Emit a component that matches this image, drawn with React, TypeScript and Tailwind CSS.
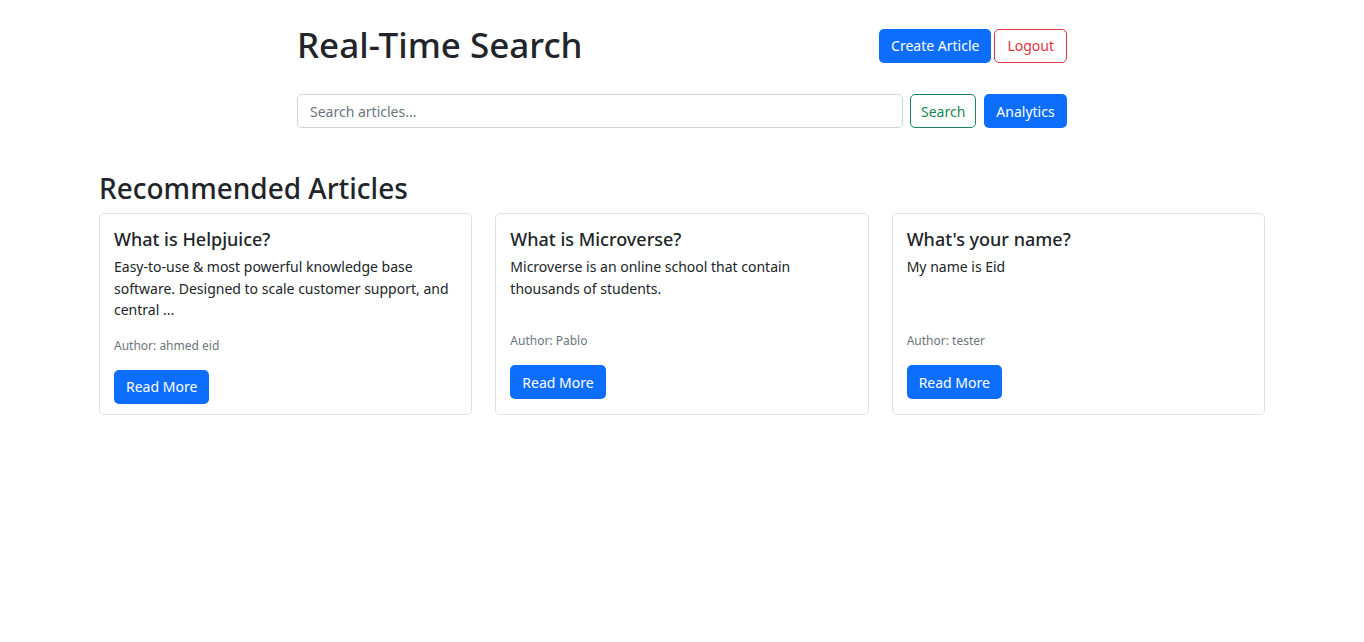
const articles = [
  {
    title: "What is Helpjuice?",
    body: "Easy-to-use & most powerful knowledge base software. Designed to scale customer support, and central ...",
    author: "ahmed eid",
  },
  {
    title: "What is Microverse?",
    body: "Microverse is an online school that contain thousands of students.",
    author: "Pablo",
  },
  {
    title: "What's your name?",
    body: "My name is Eid",
    author: "tester",
  },
];

export default function App() {
  return (
    <div className="min-h-screen bg-white text-[#212529] font-['Noto_Sans',sans-serif]">
      <div className="ml-[297px] w-[770px] pt-[22px]">
        <div className="flex items-start justify-between">
          <h1 className="text-[35px] leading-[46px] font-medium">Real-Time Search</h1>
          <div className="flex gap-[3px] pt-[7px]">
            <button className="h-[34px] rounded-[5px] bg-[#0d6efd] px-3 text-[14px] leading-[20px] text-white">Create Article</button>
            <button className="h-[34px] rounded-[5px] border border-[#dc3545] px-3 text-[14px] leading-[20px] text-[#dc3545]">Logout</button>
          </div>
        </div>
        <div className="mt-[26px] flex items-center">
          <input
            className="h-[34px] w-[606px] shrink-0 rounded-[5px] border border-[#ced4da] px-3 text-[14px] placeholder:text-[#6c757d]"
            placeholder="Search articles..."
          />
          <button className="ml-[7px] h-[34px] rounded-[5px] border border-[#198754] px-[10px] text-[14px] text-[#198754]">Search</button>
          <button className="ml-2 h-[34px] rounded-[5px] bg-[#0d6efd] px-3 text-[14px] text-white">Analytics</button>
        </div>
      </div>

      <div className="ml-[99px] w-[1166px] pt-[42px]">
        <h2 className="text-[28px] leading-[36px] font-medium">Recommended Articles</h2>
        <div className="mt-[7px] grid grid-cols-3 gap-[23px]">
          {articles.map((a) => (
            <div key={a.title} className="rounded-[5px] border border-[#dee2e6] px-[14px] pt-[14px] pb-[10px]">
              <h5 className="text-[18px] leading-[22px] font-medium">{a.title}</h5>
              <p className="mt-[6px] min-h-[60px] text-[14px] leading-[21.5px]">{a.body}</p>
              <p className="mt-[16px] text-[12px] leading-[18px] text-[#6c757d]">Author: {a.author}</p>
              <button className="mt-[15px] h-[34px] rounded-[5px] bg-[#0d6efd] px-3 text-[14px] text-white">Read More</button>
            </div>
          ))}
        </div>
      </div>
    </div>
  );
}
